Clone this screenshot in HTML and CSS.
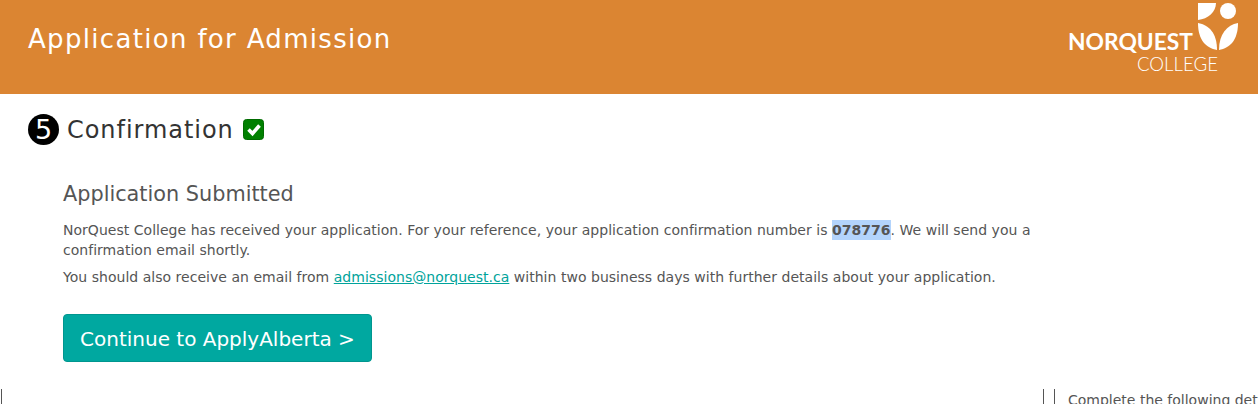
FILE: index.html
```html
<!DOCTYPE html>
<html lang="en">

<head>
    <meta charset="UTF-8">
    <meta name="viewport" content="width=device-width, initial-scale=1.0">
    <title>Application for Admission</title>
    <link rel="stylesheet" href="styles.css">
</head>

<body>
    <header class="banner">
        <h1>Application for Admission</h1>
        <svg class="logo" width="172" height="76" viewBox="0 0 172 76">
            <path d="M130 3H148C148 12 140 19 130 20Z" fill="#fff" />
            <circle cx="160" cy="11" r="8" fill="#fff" />
            <path d="M130 23C141 25 149 33 149 50C138 48 130 40 130 23Z" fill="#fff" />
            <path d="M170 23C170 40 162 48 151 50C151 34 159 25 170 23Z" fill="#fff" />
            <text class="logo-name" x="0" y="50" textLength="125" lengthAdjust="spacingAndGlyphs">NORQUEST</text>
            <text class="logo-college" x="69" y="71" textLength="81" lengthAdjust="spacingAndGlyphs">COLLEGE</text>
        </svg>
    </header>

    <section class="step">
        <h2 class="step-title">
            <span class="step-num">5</span>
            <span class="step-name">Confirmation</span>
            <svg class="tick" width="21" height="21" viewBox="0 0 21 21">
                <rect x="0.5" y="0.5" width="20" height="20" rx="3" fill="#008000" stroke="#006b00" />
                <path d="M5.5 10.5L9.5 14.5L16.5 6.5" fill="none" stroke="#fff" stroke-width="3.6" />
            </svg>
        </h2>

        <div class="step-body">
            <h3>Application Submitted</h3>
            <p>NorQuest College has received your application. For your reference, your application confirmation number is <strong class="picked">078776</strong>. We will send you a confirmation email shortly.</p>
            <p>You should also receive an email from <a href="#">admissions@norquest.ca</a> within two business days with further details about your application.</p>
            <a class="btn" href="#">Continue to ApplyAlberta &gt;</a>
        </div>
    </section>

    <div class="next-row">
        <div class="next-left"></div>
        <div class="next-mid"></div>
        <p>Complete the following details</p>
    </div>
</body>

</html>
```

FILE: styles.css
```css
* {
    margin: 0;
    padding: 0;
    box-sizing: border-box;
}

html,
body {
    height: 404px;
    overflow: hidden;
}

body {
    font-family: "DejaVu Sans", Verdana, sans-serif;
    color: #555;
    background-color: #fff;
}

.banner {
    display: flex;
    justify-content: space-between;
    height: 94px;
    padding: 0 18px 0 28px;
    background-color: #db8532;
}

.banner h1 {
    font-size: 26px;
    font-weight: 400;
    line-height: 79px;
    letter-spacing: 1.32px;
    color: #fff;
}

.logo-name {
    font-family: "Lato", sans-serif;
    font-size: 22px;
    font-weight: 700;
    fill: #fff;
}

.logo-college {
    font-family: "Lato", sans-serif;
    font-size: 19px;
    font-weight: 300;
    fill: #fff;
}

.step {
    padding: 20px 0 0 28px;
}

.step-title {
    display: flex;
    align-items: center;
    gap: 8px;
    font-size: 24px;
    font-weight: 400;
    line-height: 31px;
    letter-spacing: 0.95px;
    color: #333;
}

.step-name {
    padding-top: 2px;
    line-height: 29px;
}

.step-num {
    width: 31px;
    height: 31px;
    border-radius: 50%;
    background-color: #000;
    color: #fff;
    font-size: 27px;
    letter-spacing: 0;
    text-align: center;
}

.tick {
    margin: 0 0 0 1px;
}

.step-body {
    width: 1040px;
    padding: 35px 0 0 35px;
}

.step-body h3 {
    font-size: 20.8px;
    font-weight: 400;
    line-height: 28px;
    margin-bottom: 12px;
}

.step-body p {
    font-size: 14px;
    line-height: 20px;
    letter-spacing: 0.025px;
    margin-bottom: 7px;
}

.step-body p a {
    color: #00a39b;
}

.picked {
    display: inline-block;
    background-color: #b3d4fc;
}

.btn {
    display: block;
    width: 309px;
    height: 48px;
    margin-top: 27px;
    padding-left: 16px;
    border: 1px solid #00968f;
    border-radius: 4px;
    background-color: #00a8a0;
    color: #fff;
    font-size: 20px;
    line-height: 48px;
    text-decoration: none;
}

.next-row {
    display: flex;
    height: 15px;
    margin-top: 27px;
    overflow: hidden;
}

.next-left {
    flex: none;
    width: 2px;
    margin-left: 1px;
    border-left: 1px solid #555;
}

.next-mid {
    flex: none;
    width: 12px;
    margin-left: 1040px;
    border-left: 1px solid #555;
    border-right: 1px solid #555;
}

.next-row p {
    margin-left: 13px;
    font-size: 14px;
    line-height: 22px;
    white-space: nowrap;
}
```
